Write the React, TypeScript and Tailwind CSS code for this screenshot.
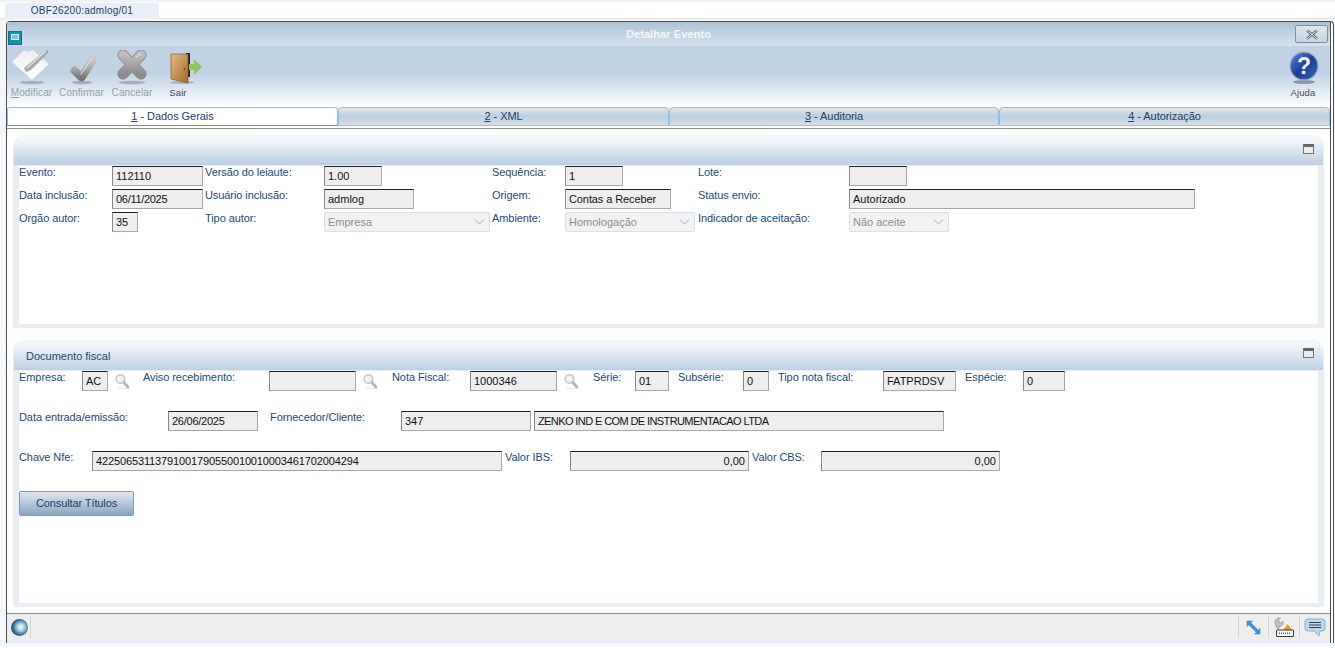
import React from 'react'

const font = 'font-["Liberation_Sans",Arial,sans-serif]'

const Label = ({ children, className = '' }: { children: React.ReactNode; className?: string }) => (
  <span className={`block text-[11px] leading-[13px] tracking-[-0.08px] text-[#1c4a75] ${className}`}>{children}</span>
)

const Input = ({ value = '', w, right = false, tr = 'tracking-normal' }: { value?: string; w: string; right?: boolean; tr?: string }) => (
  <div
    className={`h-5 shrink-0 border border-[#a8a8a8] border-t-[#222] border-l-[#888] bg-[#eeeeee] px-[3px] text-[11px] leading-[19px] text-[#111] whitespace-nowrap overflow-hidden ${tr} ${w} ${right ? 'text-right' : ''}`}
  >
    {value}
  </div>
)

const Select = ({ value, w }: { value: string; w: string }) => (
  <div className={`h-5 shrink-0 flex items-center justify-between rounded-[2px] border border-[#dcdfe2] bg-[#f1f2f3] pl-[3px] pr-[4px] text-[11px] text-[#8a8f94] ${w}`}>
    <span>{value}</span>
    <svg width="11" height="6" viewBox="0 0 11 6" fill="none" stroke="#a9adb1" strokeWidth="1">
      <path d="M1 0.5l4.500 4.500L10 0.5" />
    </svg>
  </div>
)

const Magnifier = () => (
  <svg width="15" height="17" viewBox="0 0 15 17" className="shrink-0 mt-[2px]">
    <path d="M2 15.500h12" stroke="#ececec" strokeWidth="1.500" />
    <circle cx="5.500" cy="6" r="4.300" fill="#f1f3f4" stroke="#c4c7ca" strokeWidth="1.600" />
    <path d="M8.800 9.500l4.200 4.500" stroke="#b4b7ba" strokeWidth="2.800" strokeLinecap="round" />
  </svg>
)

const PencilIcon = () => (
  <svg width="40" height="37" viewBox="0 0 40 37" className="ml-[-1px]">
    <defs>
      <linearGradient id="ppr" x1="0" y1="0" x2="0" y2="1">
        <stop offset="0" stopColor="#eeeeee" />
        <stop offset="1" stopColor="#ffffff" />
      </linearGradient>
    </defs>
    <ellipse cx="21" cy="34.500" rx="12" ry="1.800" fill="#8b949c" opacity="0.65" />
    <path d="M1 14L13 2l4 1.500L22 2l16 14-17 16z" fill="url(#ppr)" stroke="#d6d9dc" strokeWidth="0.7" />
    <path d="M13 20l2 4 5-2L37 5c1-1 0-3-2-3z" fill="#a6a8aa" />
    <path d="M16 20L35 3" stroke="#e3e4e5" strokeWidth="1.200" />
    <path d="M8 21l10 7" stroke="#dfe1e3" strokeWidth="1" />
  </svg>
)

const CheckIcon = () => (
  <svg width="32" height="35" viewBox="0 0 32 35" className="ml-[2px]">
    <defs>
      <linearGradient id="chk" x1="0" y1="0" x2="0" y2="1">
        <stop offset="0" stopColor="#c9c9c9" />
        <stop offset="0.55" stopColor="#a4a4a4" />
        <stop offset="1" stopColor="#777777" />
      </linearGradient>
    </defs>
    <ellipse cx="15" cy="32.500" rx="10" ry="1.700" fill="#8b949c" opacity="0.65" />
    <path d="M7.500 20.500l7 7L26 9.500" fill="none" stroke="url(#chk)" strokeWidth="8" strokeLinecap="round" strokeLinejoin="round" />
    <path d="M14 24L25.500 7.500" stroke="#dcdcdc" strokeWidth="1.200" strokeLinecap="round" />
  </svg>
)

const CrossIcon = () => (
  <svg width="34" height="35" viewBox="0 0 34 35">
    <defs>
      <linearGradient id="crs" x1="0" y1="0" x2="0" y2="1">
        <stop offset="0" stopColor="#bdbdbd" />
        <stop offset="1" stopColor="#8b8b8b" />
      </linearGradient>
    </defs>
    <ellipse cx="17" cy="32.500" rx="13" ry="1.700" fill="#8b949c" opacity="0.65" />
    <path d="M8 5L26 24M26 5L8 24" stroke="#868686" strokeWidth="11" strokeLinecap="round" />
    <path d="M8 5L26 24M26 5L8 24" stroke="url(#crs)" strokeWidth="9.500" strokeLinecap="round" />
    <path d="M21 7l5-3" stroke="#dadada" strokeWidth="1.200" strokeLinecap="round" />
  </svg>
)

const DoorIcon = () => (
  <svg width="34" height="34" viewBox="0 0 34 34" className="ml-[16px]">
    <defs>
      <linearGradient id="dr" x1="0" y1="0" x2="1" y2="1">
        <stop offset="0" stopColor="#e8ba7e" />
        <stop offset="1" stopColor="#a4692c" />
      </linearGradient>
    </defs>
    <ellipse cx="13" cy="31.500" rx="12" ry="1.500" fill="#8b949c" opacity="0.65" />
    <path d="M17 2h4v24h-4z" fill="#1a1d3b" />
    <path d="M2 3h17v29L2 28z" fill="url(#dr)" stroke="#8a5a28" strokeWidth="0.7" />
    <circle cx="15.500" cy="18" r="0.900" fill="#5f3a10" />
    <path d="M20 13h5V8l8 8-8 8v-5h-5z" fill="#90c75a" />
  </svg>
)

const HelpIcon = () => (
  <svg width="32" height="34" viewBox="0 0 32 34" className="ml-[1px]">
    <defs>
      <linearGradient id="hp" x1="0" y1="0" x2="1" y2="1">
        <stop offset="0" stopColor="#5b8cdc" />
        <stop offset="0.5" stopColor="#1b3f97" />
        <stop offset="1" stopColor="#3468bf" />
      </linearGradient>
    </defs>
    <ellipse cx="16" cy="31" rx="11" ry="2" fill="#747d85" opacity="0.75" />
    <circle cx="16" cy="15" r="14" fill="url(#hp)" stroke="#a7aeb9" strokeWidth="1.300" />
    <text x="16" y="23" textAnchor="middle" fontFamily="Liberation Sans" fontWeight="700" fontSize="23" fill="#eef1f6">?</text>
  </svg>
)

const Tool = ({ label, icon, disabled = false, first = false, w }: { label: string; icon: React.ReactNode; disabled?: boolean; first?: boolean; w: string }) => (
  <div className={`flex flex-col items-center ${w}`}>
    <div className="h-[39px] flex items-end justify-center">{icon}</div>
    <span className={`mt-[2px] leading-[12px] ${disabled ? 'text-[10px] tracking-[0.1px] text-[#9a9fa4]' : 'text-[9.5px] tracking-[0.1px] text-[#474c52]'}`}>
      {first ? <><span className="underline">M</span>odificar</> : label}
    </span>
  </div>
)

const Tab = ({ n, label, active = false, w }: { n: string; label: string; active?: boolean; w: string }) => (
  <div
    className={`h-[19px] text-center text-[11px] leading-[17px] tracking-[-0.05px] text-[#1c3f66] border border-[#8fc1e8] ${w} ${
      active
        ? 'bg-white rounded-t-[3px] border-[#3d9be0] border-b-[#3d9be0]'
        : 'rounded-t-[4px] bg-gradient-to-b from-[#dce7f1] via-[#bccede] to-[#d5e1ec]'
    }`}
  >
    <span className="underline">{n}</span> - {label}
  </div>
)

const Panel = ({ title, h, iconTop, children }: { title?: string; h: string; iconTop: string; children: React.ReactNode }) => (
  <div className={`rounded-t-[12px] bg-[#e9eef4] px-[1px] pb-[1px] ${h} flex flex-col`}>
    <div className="h-[30px] shrink-0 flex items-start justify-between rounded-t-[12px] bg-gradient-to-b from-[#f4f7fa] from-15% to-[#bcd0e3] pl-3 pr-[9px] pt-[9px]">
      <span className="text-[11px] leading-[14px] text-[#1c4a75]">{title}</span>
      <div className={`${iconTop} h-[10px] w-[11px] border border-[#777] border-t-[3px] border-t-[#666] bg-[#ececec]`} />
    </div>
    <div className="mx-[5px] mt-[1px] mb-[3px] flex-1 bg-white">{children}</div>
  </div>
)

export default function App() {
  return (
    <div className={`${font} h-[648px] w-[1335px] overflow-hidden bg-white`}>
      <div className="h-[2px] bg-[#eef2f6]" />
      <div className="h-[17px] border-b border-[#e2e2e2] pl-[5px] pt-[1px]">
        <div className="h-[16px] w-[154px] rounded-t-[3px] bg-[#e8eff6] text-center text-[10px] leading-[15px] tracking-[0.25px] text-[#1c3f66]">
          OBF26200:admlog/01
        </div>
      </div>

      <div className="bg-[#f4f6f9] pt-[2px] pl-[6px] h-[627px]">
        <div className="h-[622px] w-[1328px] rounded-t-[4px] border border-b-0 border-[#4c4c4c] bg-white pr-[2px]">
          <div className="h-full border-r border-[#4c4c4c] flex flex-col">
            {/* title bar */}
            <div className="relative h-[24px] shrink-0 flex items-center justify-center bg-gradient-to-b from-[#adc2d6] to-[#d6e3ef]">
              <span className="text-[11px] font-bold tracking-[0.1px] text-[#f2f6fa]">Detalhar Evento</span>
              <div className="absolute left-[1px] top-[9px] h-[14px] w-[14px] border border-[#0f6d8e] bg-[#1f8db0] p-[2px]">
                <div className="h-[6px] w-[8px] border border-[#dff1f7] bg-[#7fc2d9]" />
              </div>
              <div className="absolute right-[2px] top-[3px] flex h-[18px] w-[33px] items-center justify-center rounded-[2px] border border-[#7d8ea1] bg-gradient-to-b from-[#dde6ee] to-[#c6d5e2]">
                <svg width="14" height="11" viewBox="0 0 14 11" fill="none">
                  <path d="M2 1.500l10 8M12 1.500l-10 8" stroke="#5c5f63" strokeWidth="2.400" />
                  <path d="M2 1.500l10 8M12 1.500l-10 8" stroke="#f2f2f2" strokeWidth="0.900" />
                </svg>
              </div>
            </div>

            {/* toolbar */}
            <div className="h-[61px] shrink-0 flex items-start justify-between bg-gradient-to-b from-[#c0d3e4] from-45% to-white pr-[10px]">
              <div className="flex">
                <Tool first label="Modificar" disabled w="w-[49px]" icon={<PencilIcon />} />
                <Tool label="Confirmar" disabled w="w-[51px]" icon={<CheckIcon />} />
                <Tool label="Cancelar" disabled w="w-[50px]" icon={<CrossIcon />} />
                <Tool label="Sair" w="w-[40px] ml-[1px]" icon={<DoorIcon />} />
              </div>
              <Tool label="Ajuda" w="w-[34px]" icon={<HelpIcon />} />
            </div>

            {/* tabs */}
            <div className="h-[19px] shrink-0 flex">
              <Tab active n="1" label="Dados Gerais" w="w-[331px]" />
              <Tab n="2" label="XML" w="w-[331px]" />
              <Tab n="3" label="Auditoria" w="w-[330px]" />
              <Tab n="4" label="Autorização" w="w-[331px]" />
            </div>

            {/* content */}
            <div className="mt-[2px] flex-1 border-t border-b border-[#8a9097] bg-white px-[6px] pt-[6px]">
              <Panel h="h-[193px]" iconTop="mt-[0px]">
                <div className="grid grid-cols-[93px_93px_119px_168px_73px_133px_151px_1fr] auto-rows-[20px] gap-y-[3px]">
                  <Label>Evento:</Label>
                  <Input value="112110" w="w-[91px]" />
                  <Label>Versão do leiaute:</Label>
                  <Input value="1.00" w="w-[58px]" />
                  <Label>Sequência:</Label>
                  <Input value="1" w="w-[58px]" />
                  <Label>Lote:</Label>
                  <Input w="w-[58px]" />

                  <Label>Data inclusão:</Label>
                  <Input value="06/11/2025" tr="tracking-[-0.3px]" w="w-[91px]" />
                  <Label>Usuário inclusão:</Label>
                  <Input value="admlog" w="w-[90px]" />
                  <Label>Origem:</Label>
                  <Input value="Contas a Receber" tr="tracking-[-0.1px]" w="w-[106px]" />
                  <Label>Status envio:</Label>
                  <Input value="Autorizado" w="w-[346px]" />

                  <Label>Orgão autor:</Label>
                  <Input value="35" w="w-[26px]" />
                  <Label>Tipo autor:</Label>
                  <Select value="Empresa" w="w-[166px]" />
                  <Label>Ambiente:</Label>
                  <Select value="Homologação" w="w-[130px]" />
                  <Label>Indicador de aceitação:</Label>
                  <Select value="Não aceite" w="w-[100px]" />
                </div>
              </Panel>

              <div className="h-3" />

              <Panel h="h-[267px]" title="Documento fiscal" iconTop="mt-[-1px]">
                <div className="flex h-5 items-start">
                  <Label className="w-[63px]">Empresa:</Label>
                  <Input value="AC" w="w-[26px]" />
                  <div className="ml-[7px] w-[28px]"><Magnifier /></div>
                  <Label className="w-[126px]">Aviso recebimento:</Label>
                  <Input w="w-[87px]" />
                  <div className="ml-[7px] w-[29px]"><Magnifier /></div>
                  <Label className="w-[78px]">Nota Fiscal:</Label>
                  <Input value="1000346" w="w-[87px]" />
                  <div className="ml-[7px] w-[29px]"><Magnifier /></div>
                  <Label className="w-[42px]">Série:</Label>
                  <Input value="01" w="w-[34px]" />
                  <Label className="ml-[9px] w-[65px]">Subsérie:</Label>
                  <Input value="0" w="w-[26px]" />
                  <Label className="ml-[9px] w-[105px]">Tipo nota fiscal:</Label>
                  <Input value="FATPRDSV" w="w-[73px]" />
                  <Label className="ml-[9px] w-[58px]">Espécie:</Label>
                  <Input value="0" w="w-[42px]" />
                </div>

                <div className="mt-5 flex h-5 items-start">
                  <Label className="w-[149px]">Data entrada/emissão:</Label>
                  <Input value="26/06/2025" tr="tracking-[-0.25px]" w="w-[90px]" />
                  <Label className="ml-3 w-[131px]">Fornecedor/Cliente:</Label>
                  <Input value="347" w="w-[130px]" />
                  <div className="w-[3px]" />
                  <Input value="ZENKO IND E COM DE INSTRUMENTACAO LTDA" tr="tracking-[-0.6px]" w="w-[410px]" />
                </div>

                <div className="mt-5 flex h-5 items-start">
                  <Label className="w-[73px]">Chave Nfe:</Label>
                  <Input value="42250653113791001790550010010003461702004294" tr="tracking-[-0.13px]" w="w-[410px]" />
                  <Label className="ml-[3px] w-[65px]">Valor IBS:</Label>
                  <Input value="0,00" right w="w-[179px]" />
                  <Label className="ml-[3px] w-[69px]">Valor CBS:</Label>
                  <Input value="0,00" right w="w-[179px]" />
                </div>

                <button className="mt-5 block h-[25px] w-[115px] rounded-[2px] border border-[#7f9ab5] bg-gradient-to-b from-[#dfe8f1] to-[#8ba6c1] text-[11px] tracking-[-0.1px] text-[#1c3f66]">
                  Consultar Títulos
                </button>
              </Panel>
            </div>

            {/* status bar */}
            <div className="flex h-[26px] shrink-0 items-center justify-between bg-[#eeeeee]">
              <div className="flex h-[22px] items-center border-r border-[#d6d6d6] pl-[4px] pr-[2px]">
                <div className="h-[17px] w-[17px] rounded-full bg-[radial-gradient(circle_at_58%_48%,#ffffff_0%,#a7cfe0_28%,#2b7097_58%,#0d1d45_100%)]" />
              </div>
              <div className="flex h-[22px] items-center">
                <div className="flex h-full w-[30px] items-center justify-center border-l border-[#d6d6d6]">
                  <svg width="15" height="15" viewBox="0 0 15 15">
                    <path d="M1 1h5.500L4.800 2.700l7.500 7.500L14 8.500V14H8.500l1.700-1.700-7.500-7.500L1 6.500z" fill="#3b97e2" stroke="#2a7cc4" strokeWidth="0.500" />
                  </svg>
                </div>
                <div className="flex h-full w-[31px] items-center justify-center border-l border-[#d6d6d6]">
                  <svg width="20" height="21" viewBox="0 0 20 21">
                    <path d="M1 4.500A4.500 4.500 0 0 1 6.500 1L4.500 3.500l2 2.500L9 4a4.500 4.500 0 0 1-3 5.500L4.500 12C2 11 .5 7 1 4.500z" fill="#bcbfc2" stroke="#85888b" strokeWidth="0.500" />
                    <path d="M9 13l4.500-6 4.500 6z" fill="#ef9b1e" />
                    <rect x="2.500" y="13" width="17" height="6.500" rx="0.500" fill="#f6f6f6" stroke="#222" strokeWidth="0.900" />
                    <path d="M5 16.200h12" stroke="#555" strokeWidth="1.400" strokeDasharray="1 1" />
                  </svg>
                </div>
                <div className="flex h-full w-[31px] items-center justify-center border-l border-[#d6d6d6]">
                  <svg width="22" height="19" viewBox="0 0 22 19">
                    <path d="M4 1h14a3 3 0 0 1 3 3v6a3 3 0 0 1-3 3h-2l-1 5-5-5H4a3 3 0 0 1-3-3V4a3 3 0 0 1 3-3z" fill="#bcd7ee" stroke="#7fb3dc" />
                    <path d="M5 4.500h12M5 7h12M5 9.500h12" stroke="#3c4146" strokeWidth="1" />
                  </svg>
                </div>
              </div>
            </div>
            <div className="h-[3px] shrink-0 bg-[#e6ecf3]" />
          </div>
        </div>
      </div>
    </div>
  )
}
